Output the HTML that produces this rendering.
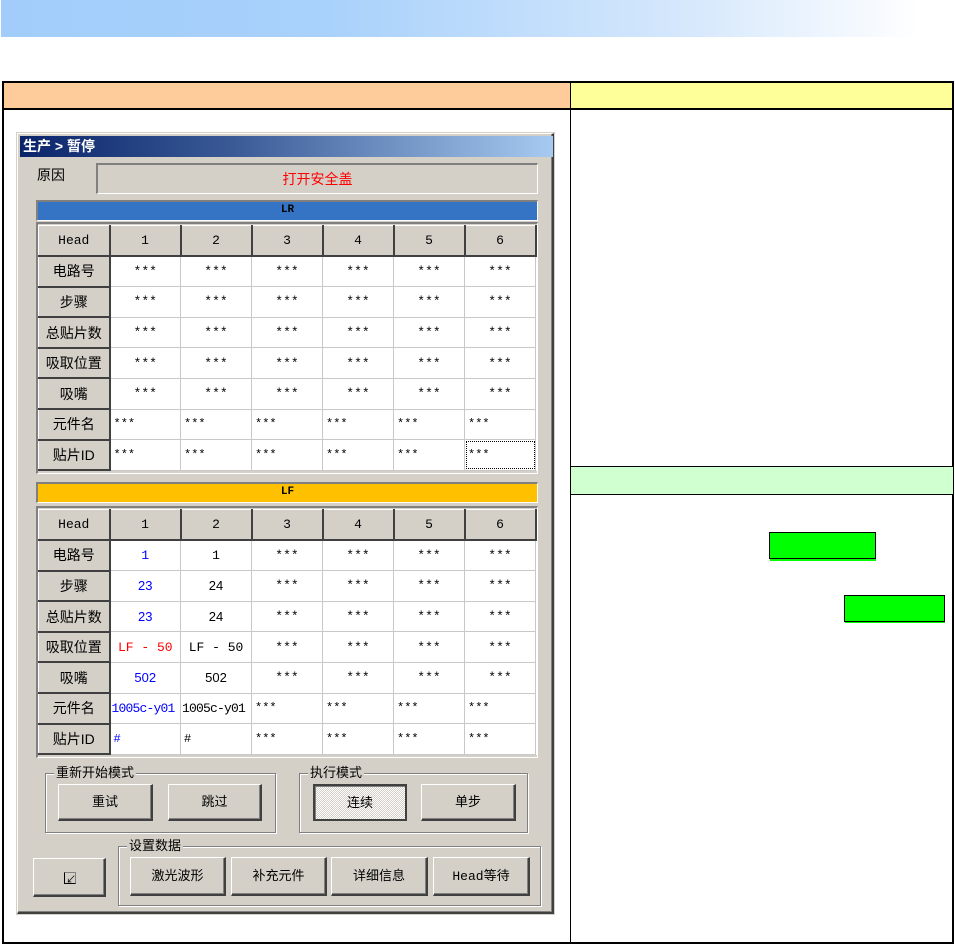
<!DOCTYPE html>
<html><head><meta charset="utf-8">
<style>
*{box-sizing:border-box;margin:0;padding:0}
body{width:955px;height:944px;position:relative;background:#fff;font-family:"Liberation Sans","Noto Sans CJK SC",sans-serif;overflow:hidden}
.a{position:absolute}
.topbar{left:1px;top:0;width:920px;height:37px;background:linear-gradient(90deg,#a2cdfb 0%,#a8d1fb 35%,#d6e8fc 75%,#fff 100%)}
.dlg{left:17px;top:133px;width:537px;height:781px;background:#d4d0c8;border:1px solid #fff;border-right:2px solid #404040;border-bottom:2px solid #404040;box-shadow:inset -1px -1px 0 #808080, 0 0 0 1px #d4d0c8}
.title{left:20px;top:136px;width:533px;height:21px;background:linear-gradient(90deg,#0a246a 0%,#3a5a96 40%,#a6caf0 100%);color:#fff;font-weight:bold;font-size:14px;line-height:21px;padding-left:3px}
.sunk{border-top:2px solid #808080;border-left:2px solid #808080;border-bottom:1px solid #fff;border-right:1px solid #fff}
.band{font-family:"Liberation Mono",monospace;font-weight:bold;font-size:11px;text-align:center;line-height:17px;color:#000}
table.g{position:absolute;border-collapse:collapse;table-layout:fixed;background:#fff;font-size:13px;color:#000}
table.g tr{height:30.6px}
table.g td{border-right:1px solid #c8c8c8;border-bottom:1px solid #c8c8c8;text-align:center;padding:0;white-space:nowrap;overflow:hidden}
table.g td.h{background:#d4d0c8;border-top:1px solid #fff;border-left:1px solid #fff;border-right:2px solid #404040;border-bottom:2px solid #404040;font-size:14px}
table.g tr:first-child td{font-family:"Liberation Mono",monospace;font-size:13px}
table.g td.l{text-align:left;padding-left:3px;font-family:"Liberation Mono",monospace;font-size:12px}
.m{font-family:"Liberation Mono",monospace;font-size:13px}
.b{color:#0000ff}.r{color:#ff0000}
.grp{border:1px solid #808080;box-shadow:1px 1px 0 #fff inset,1px 1px 0 #fff}
.glab{position:absolute;top:-9px;left:8px;background:#d4d0c8;padding:0 2px;font-size:13px;line-height:16px}
.btn{position:absolute;background:#d4d0c8;border-top:1px solid #fff;border-left:1px solid #fff;border-right:2px solid #404040;border-bottom:2px solid #404040;box-shadow:inset -1px -1px 0 #808080;font-size:13px;text-align:center}
</style></head><body>
<div class="a topbar"></div>

<div class="a" style="left:2px;top:81px;width:569px;height:29px;background:#fecc9a;border:2px solid #000;border-right:1px solid #000"></div>
<div class="a" style="left:570px;top:81px;width:384px;height:29px;background:#ffff99;border:2px solid #000;border-left:1px solid #000"></div>
<div class="a" style="left:2px;top:108px;width:569px;height:836px;border:2px solid #000;border-right:1px solid #000;border-top:1px solid #000"></div>
<div class="a" style="left:570px;top:108px;width:384px;height:836px;border:2px solid #000;border-left:1px solid #000;border-top:1px solid #000"></div>
<div class="a" style="left:571px;top:466px;width:382px;height:29px;background:#d0ffd0;border-top:1px solid #000;border-bottom:1px solid #000"></div>
<div class="a" style="left:770px;top:535px;width:106px;height:26px;background:#00ff00"></div>
<div class="a" style="left:769px;top:532px;width:107px;height:27px;background:#00ff00;border:1px solid #000"></div>
<div class="a" style="left:845px;top:597px;width:100px;height:26px;background:#00ff00"></div>
<div class="a" style="left:844px;top:595px;width:101px;height:27px;background:#00ff00;border:1px solid #000"></div>

<div class="a dlg"></div>
<div class="a title">生产 &gt; 暂停</div>
<div class="a" style="left:37px;top:165px;font-size:14px">原因</div>
<div class="a sunk" style="left:96px;top:163px;width:442px;height:31px;color:#ff0000;font-size:14px;text-align:center;line-height:28px">打开安全盖</div>

<div class="a sunk band" style="left:36px;top:200px;width:502px;height:21px;background:#3574c4"><span style="display:block;line-height:17px">LR</span></div>
<div class="a sunk" style="left:36px;top:222px;width:502px;height:252px"></div>
<table class="g" style="left:38px;top:225px;width:497px;height:246px">
<colgroup><col style="width:71px"><col style="width:71px"><col style="width:71px"><col style="width:71px"><col style="width:71px"><col style="width:71px"><col style="width:71px"></colgroup>
<tr><td class="h">Head</td><td class="h">1</td><td class="h">2</td><td class="h">3</td><td class="h">4</td><td class="h">5</td><td class="h">6</td></tr>
<tr><td class="h">电路号</td><td class="m">***</td><td class="m">***</td><td class="m">***</td><td class="m">***</td><td class="m">***</td><td class="m">***</td></tr>
<tr><td class="h">步骤</td><td class="m">***</td><td class="m">***</td><td class="m">***</td><td class="m">***</td><td class="m">***</td><td class="m">***</td></tr>
<tr><td class="h">总贴片数</td><td class="m">***</td><td class="m">***</td><td class="m">***</td><td class="m">***</td><td class="m">***</td><td class="m">***</td></tr>
<tr><td class="h">吸取位置</td><td class="m">***</td><td class="m">***</td><td class="m">***</td><td class="m">***</td><td class="m">***</td><td class="m">***</td></tr>
<tr><td class="h">吸嘴</td><td class="m">***</td><td class="m">***</td><td class="m">***</td><td class="m">***</td><td class="m">***</td><td class="m">***</td></tr>
<tr><td class="h">元件名</td><td class="l">***</td><td class="l">***</td><td class="l">***</td><td class="l">***</td><td class="l">***</td><td class="l">***</td></tr>
<tr><td class="h">贴片ID</td><td class="l">***</td><td class="l">***</td><td class="l">***</td><td class="l">***</td><td class="l">***</td><td class="l" style="outline:1px dotted #000;outline-offset:-2px">***</td></tr>
</table>

<div class="a sunk band" style="left:36px;top:482px;width:502px;height:21px;background:#ffc000"><span style="display:block;line-height:17px">LF</span></div>
<div class="a sunk" style="left:36px;top:506px;width:502px;height:252px"></div>
<table class="g" style="left:38px;top:509px;width:497px;height:246px">
<colgroup><col style="width:71px"><col style="width:71px"><col style="width:71px"><col style="width:71px"><col style="width:71px"><col style="width:71px"><col style="width:71px"></colgroup>
<tr><td class="h">Head</td><td class="h">1</td><td class="h">2</td><td class="h">3</td><td class="h">4</td><td class="h">5</td><td class="h">6</td></tr>
<tr><td class="h">电路号</td><td class="m b">1</td><td class="m">1</td><td class="m">***</td><td class="m">***</td><td class="m">***</td><td class="m">***</td></tr>
<tr><td class="h">步骤</td><td class="b">23</td><td>24</td><td class="m">***</td><td class="m">***</td><td class="m">***</td><td class="m">***</td></tr>
<tr><td class="h">总贴片数</td><td class="b">23</td><td>24</td><td class="m">***</td><td class="m">***</td><td class="m">***</td><td class="m">***</td></tr>
<tr><td class="h">吸取位置</td><td class="m r">LF - 50</td><td class="m">LF - 50</td><td class="m">***</td><td class="m">***</td><td class="m">***</td><td class="m">***</td></tr>
<tr><td class="h">吸嘴</td><td class="b">502</td><td>502</td><td class="m">***</td><td class="m">***</td><td class="m">***</td><td class="m">***</td></tr>
<tr><td class="h">元件名</td><td class="l b" style="padding-left:1px;font-size:13px;letter-spacing:-0.8px">1005c-y01</td><td class="l" style="padding-left:1px;font-size:13px;letter-spacing:-0.8px">1005c-y01</td><td class="l">***</td><td class="l">***</td><td class="l">***</td><td class="l">***</td></tr>
<tr><td class="h">贴片ID</td><td class="l b">#</td><td class="l">#</td><td class="l">***</td><td class="l">***</td><td class="l">***</td><td class="l">***</td></tr>
</table>

<div class="a grp" style="left:45px;top:773px;width:231px;height:60px"><span class="glab">重新开始模式</span></div>
<div class="btn" style="left:58px;top:784px;width:95px;height:37px;line-height:33px">重试</div>
<div class="btn" style="left:168px;top:784px;width:94px;height:37px;line-height:33px">跳过</div>
<div class="a grp" style="left:299px;top:773px;width:229px;height:60px"><span class="glab">执行模式</span></div>
<div class="btn" style="left:313px;top:784px;width:94px;height:37px;line-height:33px;border:2px solid #404040;background:repeating-conic-gradient(#fff 0 25%,#d4d0c8 0 50%) 0 0/2px 2px;box-shadow:inset 1px 1px 0 #808080">连续</div>
<div class="btn" style="left:421px;top:784px;width:95px;height:37px;line-height:33px">单步</div>

<div class="a grp" style="left:118px;top:846px;width:423px;height:60px"><span class="glab">设置数据</span></div>
<div class="btn" style="left:33px;top:858px;width:73px;height:39px"><span style="position:absolute;left:30px;top:13px;width:12px;height:12px;border:1px solid #000;border-right:1px solid #808080;border-top:1px solid #808080"></span><span style="position:absolute;left:32px;top:12px;font-size:10px">↙</span></div>
<div class="btn" style="left:130px;top:857px;width:96px;height:39px;line-height:35px">激光波形</div>
<div class="btn" style="left:231px;top:857px;width:96px;height:39px;line-height:35px">补充元件</div>
<div class="btn" style="left:331px;top:857px;width:97px;height:39px;line-height:35px">详细信息</div>
<div class="btn" style="left:433px;top:857px;width:97px;height:39px;line-height:35px"><span class="m">Head</span>等待</div>
</body></html>
